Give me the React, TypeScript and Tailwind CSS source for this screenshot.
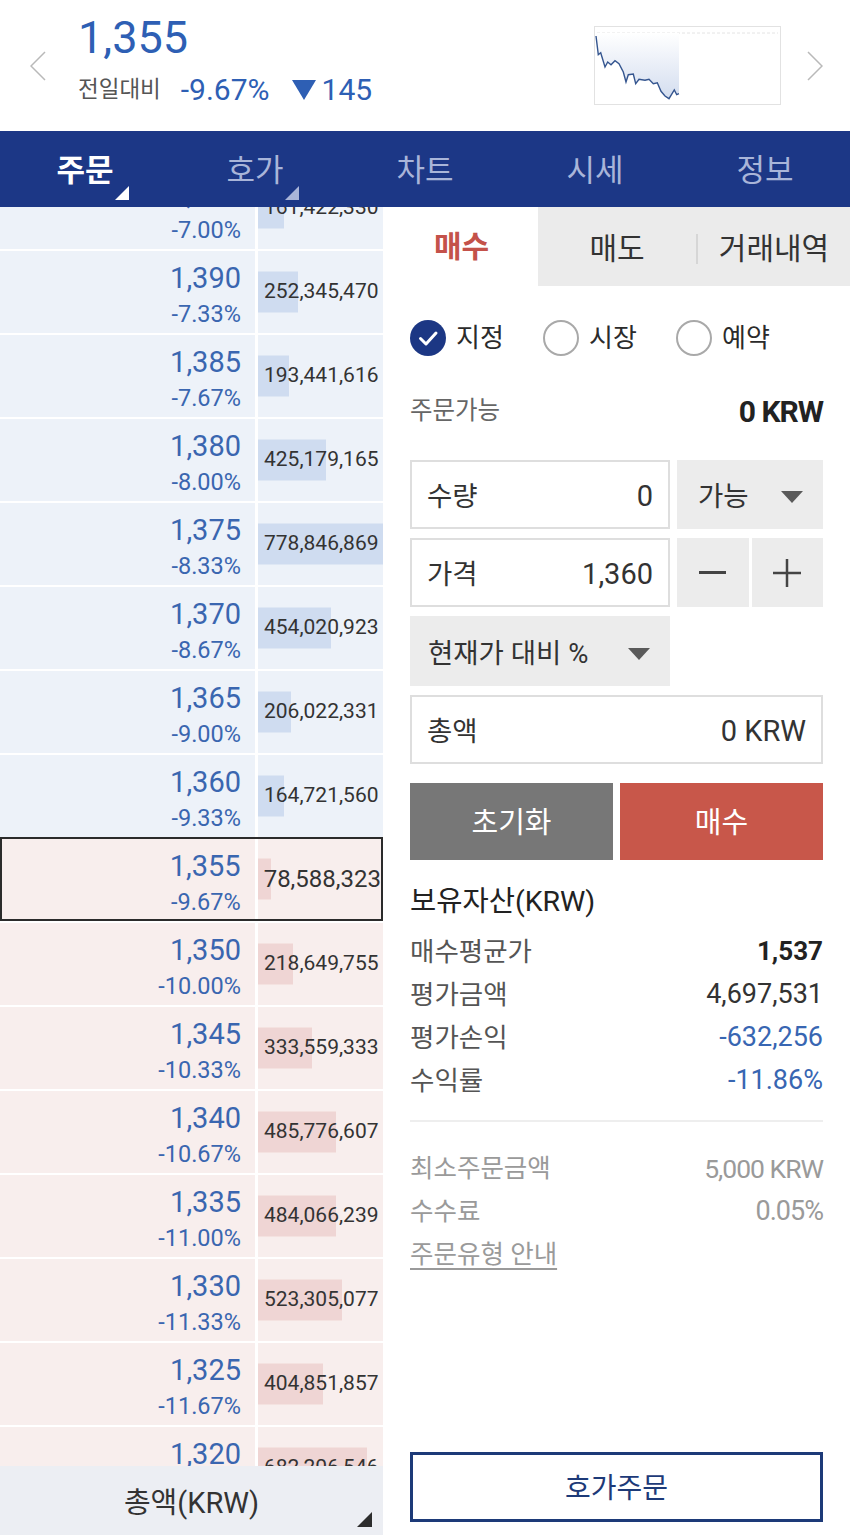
import React from 'react';

type Row = { price: string; pct: string; vol: string; v: number };

const asks: Row[] = [
  { price: '1,395', pct: '-7.00%', vol: '161,422,330', v: 161422330 },
  { price: '1,390', pct: '-7.33%', vol: '252,345,470', v: 252345470 },
  { price: '1,385', pct: '-7.67%', vol: '193,441,616', v: 193441616 },
  { price: '1,380', pct: '-8.00%', vol: '425,179,165', v: 425179165 },
  { price: '1,375', pct: '-8.33%', vol: '778,846,869', v: 778846869 },
  { price: '1,370', pct: '-8.67%', vol: '454,020,923', v: 454020923 },
  { price: '1,365', pct: '-9.00%', vol: '206,022,331', v: 206022331 },
  { price: '1,360', pct: '-9.33%', vol: '164,721,560', v: 164721560 },
];

const bids: Row[] = [
  { price: '1,355', pct: '-9.67%', vol: '78,588,323', v: 78588323 },
  { price: '1,350', pct: '-10.00%', vol: '218,649,755', v: 218649755 },
  { price: '1,345', pct: '-10.33%', vol: '333,559,333', v: 333559333 },
  { price: '1,340', pct: '-10.67%', vol: '485,776,607', v: 485776607 },
  { price: '1,335', pct: '-11.00%', vol: '484,066,239', v: 484066239 },
  { price: '1,330', pct: '-11.33%', vol: '523,305,077', v: 523305077 },
  { price: '1,325', pct: '-11.67%', vol: '404,851,857', v: 404851857 },
  { price: '1,320', pct: '-12.00%', vol: '682,206,546', v: 682206546 },
];

const MAX_VOL = 778846869;

const Chevron = ({ dir }: { dir: 'left' | 'right' }) => (
  <svg width="16" height="30" viewBox="0 0 16 30" className="shrink-0">
    <polyline
      points={dir === 'left' ? '15,1 1,15 15,29' : '1,1 15,15 1,29'}
      fill="none"
      stroke="#b9b9b9"
      strokeWidth="1.5"
    />
  </svg>
);

const Sparkline = () => {
  const pts =
    '1,9 3.3,27.7 5.7,25.7 10,40 12.7,35 16,37.7 20,33.7 24,36.7 28.3,45 31,55 33.3,47.7 38.3,47 40.7,56.7 44,52.3 50,53.3 54,52.3 58.3,56.7 62.3,55.7 66,64.3 70,69 74,71.7 79.3,63 81.7,67.7 84,66.7';
  return (
    <div className="w-[187px] h-[79px] border border-[#e2e2e2] bg-white">
      <svg width="185" height="77" viewBox="0 0 185 77">
        <defs>
          <linearGradient id="spk" x1="0" y1="0" x2="0" y2="1">
            <stop offset="0" stopColor="#ffffff" />
            <stop offset="1" stopColor="#d3ddef" />
          </linearGradient>
        </defs>
        <line x1="2" y1="6" x2="183" y2="6" stroke="#e4e4e4" strokeDasharray="3 2" />
        <polygon points={`84,6 1,6 ${pts}`} fill="url(#spk)" />
        <polyline points={pts} fill="none" stroke="#34558f" strokeWidth="1.4" />
      </svg>
    </div>
  );
};

const Tri = ({ color, size = 15 }: { color: string; size?: number }) => (
  <svg width={size} height={size} viewBox="0 0 15 15">
    <polygon points="15,0 15,15 0,15" fill={color} />
  </svg>
);

const Caret = ({ color = '#5a5a5a' }: { color?: string }) => (
  <svg width="22" height="12" viewBox="0 0 22 12">
    <polygon points="0,0 22,0 11,12" fill={color} />
  </svg>
);

const BookRow = ({ row, side, current }: { row: Row; side: 'ask' | 'bid'; current?: boolean }) => {
  const cellBg = side === 'ask' ? 'bg-[#edf2f9]' : 'bg-[#f8eeed]';
  const barBg = side === 'ask' ? 'bg-[#cfdcf0]' : 'bg-[#efd5d4]';
  const barW = Math.round((row.v / MAX_VOL) * 125);
  return (
    <div
      className={
        current
          ? 'flex gap-[3px] h-[84px] -mt-[2px] border-2 border-[#2b2b2b]'
          : 'flex gap-[3px] h-[82px]'
      }
    >
      <div
        className={`${current ? 'w-[253px]' : 'w-[255px]'} ${cellBg} flex flex-col items-end pr-[14px] pt-[10px] text-[#3a66b0]`}
      >
        <div className="text-[29px] leading-[34px]">{row.price}</div>
        <div className="text-[23.5px] leading-[38px]">{row.pct}</div>
      </div>
      <div className={`flex-1 ${cellBg} relative flex items-center`}>
        <div
          className={`absolute left-0 top-1/2 -translate-y-1/2 h-[41px] ${barBg}`}
          style={{ width: barW }}
        />
        <span
          className={`relative pl-[6px] text-[#333] whitespace-nowrap ${current ? 'text-[24px]' : 'text-[21px]'}`}
        >
          {row.vol}
        </span>
      </div>
    </div>
  );
};

const Radio = ({ checked, label }: { checked?: boolean; label: string }) => (
  <div className="w-[133px] flex items-center gap-[10px]">
    {checked ? (
      <svg width="36" height="36" viewBox="0 0 36 36">
        <circle cx="18" cy="18" r="18" fill="#1c3784" />
        <polyline points="10.5,18.5 16,24 26,13" fill="none" stroke="#fff" strokeWidth="3" strokeLinecap="round" strokeLinejoin="round" />
      </svg>
    ) : (
      <svg width="36" height="36" viewBox="0 0 36 36">
        <circle cx="18" cy="18" r="17" fill="#fff" stroke="#a9a9a9" strokeWidth="2" />
      </svg>
    )}
    <span className="text-[26px] text-[#2b2b2b]">{label}</span>
  </div>
);

const InfoRow = ({ label, value, valueClass }: { label: string; value: string; valueClass: string }) => (
  <div className="h-[43px] flex items-center justify-between">
    <span className="text-[26.5px] text-[#555]">{label}</span>
    <span className={valueClass}>{value}</span>
  </div>
);

export default function App() {
  return (
    <div className="w-[850px] h-[1535px] flex flex-col bg-white overflow-hidden font-['Roboto','Noto_Sans_CJK_KR',sans-serif]">
      {/* header */}
      <div className="h-[131px] flex items-center pl-[30px] pr-[27px]">
        <Chevron dir="left" />
        <div className="ml-[32px] flex-1 flex flex-col -mt-[14px]">
          <div className="text-[45px] leading-[50px] text-[#2e5fb4]">1,355</div>
          <div className="flex items-center mt-[12px] h-[30px]">
            <span className="text-[22.5px] text-[#555]">전일대비</span>
            <span className="ml-[20px] text-[30px] text-[#2e5fb4]">-9.67%</span>
            <span className="ml-[22px] flex items-center text-[30px] text-[#2e5fb4]">
              <svg width="24" height="20" viewBox="0 0 24 20" className="mr-[6px]">
                <polygon points="0,0 24,0 12,20" fill="#2e5fb4" />
              </svg>
              145
            </span>
          </div>
        </div>
        <Sparkline />
        <div className="ml-[26px]">
          <Chevron dir="right" />
        </div>
      </div>

      {/* tab bar */}
      <div className="h-[76px] bg-[#1c3786] grid grid-cols-5 items-center pt-[4px]">
        {['주문', '호가', '차트', '시세', '정보'].map((t, i) => (
          <div key={t} className="flex justify-center">
            <span
              className={`relative text-[31px] leading-[40px] ${i === 0 ? 'text-white font-bold' : 'text-[#a9b5d9]'}`}
            >
              {t}
              {i < 2 && (
                <span className="absolute -right-[15px] bottom-[-9px]">
                  <Tri color={i === 0 ? '#ffffff' : '#a9b5d9'} size={14} />
                </span>
              )}
            </span>
          </div>
        ))}
      </div>

      {/* body */}
      <div className="flex-1 flex min-h-0">
        {/* order book */}
        <div className="w-[383px] flex flex-col">
          <div className="flex-1 overflow-hidden">
            <div className="-mt-[40px] flex flex-col gap-[2px]">
              {asks.map((r) => (
                <BookRow key={r.price} row={r} side="ask" />
              ))}
              {bids.map((r, i) => (
                <BookRow key={r.price} row={r} side="bid" current={i === 0} />
              ))}
            </div>
          </div>
          <div className="h-[69px] bg-[#eceef3] flex items-center justify-center relative pt-[6px]">
            <span className="text-[29px] text-[#333]">총액(KRW)</span>
            <span className="absolute right-[11px] bottom-[8px]">
              <Tri color="#2d2d2d" size={15} />
            </span>
          </div>
        </div>

        {/* order panel */}
        <div className="flex-1 ml-[2px] flex flex-col">
          <div className="h-[79px] flex pt-[4px] bg-[#ebebeb]">
            <div className="w-[153px] -mt-[4px] bg-white flex items-center justify-center text-[30px] font-bold text-[#c4524a]">
              매수
            </div>
            <div className="flex-1 flex items-center">
              <div className="w-[158px] text-center text-[30px] text-[#333]">매도</div>
              <div className="w-[2px] h-[30px] bg-[#d6d6d6]" />
              <div className="flex-1 text-center text-[30px] text-[#333]">거래내역</div>
            </div>
          </div>

          <div className="flex-1 flex flex-col pl-[25px] pr-[27px]">
            <div className="mt-[34px] h-[36px] flex items-center">
              <Radio checked label="지정" />
              <Radio label="시장" />
              <Radio label="예약" />
            </div>

            <div className="mt-[37px] h-[36px] flex items-center justify-between">
              <span className="text-[24.5px] text-[#666]">주문가능</span>
              <span className="text-[30px] font-bold text-[#222] tracking-[-1px]">0 KRW</span>
            </div>

            <div className="mt-[31px] flex gap-[7px] h-[69px]">
              <div className="w-[260px] border-2 border-[#dedede] flex items-center justify-between px-[15px] pt-[5px]">
                <span className="text-[27.5px] text-[#333]">수량</span>
                <span className="text-[29px] text-[#333]">0</span>
              </div>
              <div className="flex-1 bg-[#ececec] flex items-center justify-between pl-[21px] pr-[20px] pt-[5px]">
                <span className="text-[27.5px] text-[#333]">가능</span>
                <Caret />
              </div>
            </div>

            <div className="mt-[9px] flex gap-[7px] h-[69px]">
              <div className="w-[260px] border-2 border-[#dedede] flex items-center justify-between px-[15px] pt-[5px]">
                <span className="text-[27.5px] text-[#333]">가격</span>
                <span className="text-[29px] text-[#333]">1,360</span>
              </div>
              <div className="flex-1 flex gap-[3px]">
                <div className="flex-1 bg-[#ececec] flex items-center justify-center">
                  <div className="w-[27px] h-[2.5px] bg-[#444]" />
                </div>
                <div className="flex-1 bg-[#ececec] flex items-center justify-center">
                  <svg width="28" height="28" viewBox="0 0 28 28">
                    <line x1="0" y1="14" x2="28" y2="14" stroke="#444" strokeWidth="2.5" />
                    <line x1="14" y1="0" x2="14" y2="28" stroke="#444" strokeWidth="2.5" />
                  </svg>
                </div>
              </div>
            </div>

            <div className="mt-[9px] w-[260px] h-[70px] bg-[#ececec] flex items-center justify-between pl-[18px] pr-[20px] pt-[5px]">
              <span className="text-[27.5px] text-[#333]">현재가 대비 %</span>
              <Caret />
            </div>

            <div className="mt-[9px] h-[69px] border-2 border-[#dedede] flex items-center justify-between px-[15px] pt-[5px]">
              <span className="text-[27.5px] text-[#333]">총액</span>
              <span className="text-[29px] text-[#333]">0 KRW</span>
            </div>

            <div className="mt-[19px] h-[77px] flex gap-[7px]">
              <div className="flex-1 bg-[#777777] flex items-center justify-center text-[29px] text-white pt-[5px]">
                초기화
              </div>
              <div className="flex-1 bg-[#c8574a] flex items-center justify-center text-[29px] text-white pt-[5px]">
                매수
              </div>
            </div>

            <div className="mt-[24px] text-[28.5px] leading-[36px] text-[#222]">보유자산(KRW)</div>

            <div className="mt-[10px] flex flex-col">
              <InfoRow label="매수평균가" value="1,537" valueClass="text-[26px] font-bold text-[#222]" />
              <InfoRow label="평가금액" value="4,697,531" valueClass="text-[27px] text-[#333]" />
              <InfoRow label="평가손익" value="-632,256" valueClass="text-[27px] text-[#3866b2]" />
              <InfoRow label="수익률" value="-11.86%" valueClass="text-[27px] text-[#3866b2]" />
            </div>

            <div className="mt-[18px] h-[2px] bg-[#eeeeee]" />

            <div className="mt-[25px] flex flex-col text-[#9a9a9a]">
              <div className="h-[43px] flex items-center justify-between">
                <span className="text-[25.5px]">최소주문금액</span>
                <span className="text-[26.5px] tracking-[-1px]">5,000 KRW</span>
              </div>
              <div className="h-[43px] flex items-center justify-between">
                <span className="text-[25.5px]">수수료</span>
                <span className="text-[27px] tracking-[-1px]">0.05%</span>
              </div>
              <div className="h-[43px] flex items-center">
                <span className="text-[25.5px] underline underline-offset-[5px]">주문유형 안내</span>
              </div>
            </div>

            <div className="mt-auto mb-[13px] h-[70px] border-[3px] border-[#1d3a78] flex items-center justify-center text-[28px] text-[#1d3a78] pt-[3px]">
              호가주문
            </div>
          </div>
        </div>
      </div>
    </div>
  );
}
